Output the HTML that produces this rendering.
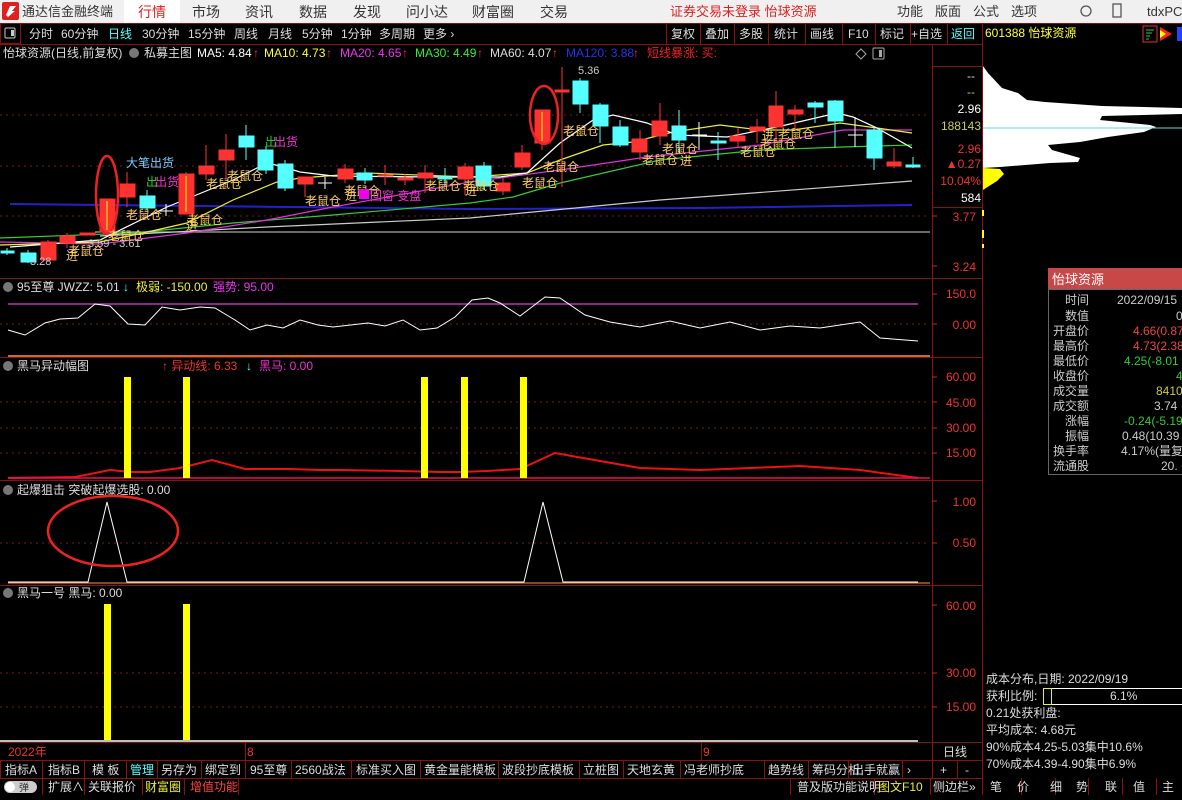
<!DOCTYPE html>
<html><head><meta charset="utf-8"><style>
*{margin:0;padding:0;box-sizing:border-box}
body{width:1182px;height:795px;overflow:hidden;background:#000;font-family:"Liberation Sans","Noto Sans CJK SC",sans-serif}
svg text{font-family:"Liberation Sans","Noto Sans CJK SC",sans-serif}
</style></head><body>
<svg width="1182" height="795" viewBox="0 0 1182 795" xmlns="http://www.w3.org/2000/svg">
<rect x="0" y="0" width="1182" height="23" fill="#f0f0f0"/>
<rect x="2" y="2" width="17" height="18" rx="2" fill="#e02020"/>
<path d="M6 15 L10 6 L16 6 L12 11 L15 11 L8 17 Z" fill="#fff"/>
<g font-size="13" fill="#333">
<text x="22" y="16">通达信金融终端</text>
<rect x="124" y="0" width="56" height="23" fill="#fff"/>
<text x="138" y="17" fill="#e02020" font-size="14">行情</text>
<text x="192" y="17" font-size="14">市场</text>
<text x="245" y="17" font-size="14">资讯</text>
<text x="299" y="17" font-size="14">数据</text>
<text x="353" y="17" font-size="14">发现</text>
<text x="406" y="17" font-size="14">问小达</text>
<text x="472" y="17" font-size="14">财富圈</text>
<text x="540" y="17" font-size="14">交易</text>
<text x="670" y="16" fill="#e02020">证券交易未登录  怡球资源</text>
<text x="897" y="16">功能</text><text x="935" y="16">版面</text><text x="973" y="16">公式</text><text x="1011" y="16">选项</text>
<text x="1147" y="16">tdxPC</text>
</g>
<circle cx="1086" cy="11" r="5" fill="none" stroke="#555" stroke-width="1.3"/>
<rect x="1113" y="4" width="8" height="13" fill="none" stroke="#555" stroke-width="1.3"/>
<rect x="0" y="23" width="1182" height="1" fill="#8a1010"/>
<g stroke="#8a1010" fill="none">
<rect x="0.5" y="23.5" width="20" height="20"/>
<line x1="0" y1="44.5" x2="982" y2="44.5"/>
<line x1="982.5" y1="23" x2="982.5" y2="795"/>
<line x1="666.5" y1="23" x2="666.5" y2="44"/><line x1="700.5" y1="23" x2="700.5" y2="44"/><line x1="734.5" y1="23" x2="734.5" y2="44"/><line x1="768.5" y1="23" x2="768.5" y2="44"/><line x1="805.5" y1="23" x2="805.5" y2="44"/><line x1="842.5" y1="23" x2="842.5" y2="44"/><line x1="875.5" y1="23" x2="875.5" y2="44"/><line x1="910.5" y1="23" x2="910.5" y2="44"/><line x1="947.5" y1="23" x2="947.5" y2="44"/>
</g>
<rect x="5" y="28" width="10" height="10" rx="1" fill="none" stroke="#ccc"/><rect x="11" y="30" width="3" height="6" fill="#ccc"/>
<g font-size="12" fill="#ddd">
<text x="29" y="38">分时</text><text x="61" y="38">60分钟</text><text x="108" y="38" fill="#5ff">日线</text><text x="142" y="38">30分钟</text><text x="188" y="38">15分钟</text><text x="234" y="38">周线</text><text x="268" y="38">月线</text><text x="302" y="38">5分钟</text><text x="341" y="38">1分钟</text><text x="379" y="38">多周期</text><text x="423" y="38">更多 ›</text>
<text x="671" y="38">复权</text><text x="705" y="38">叠加</text><text x="739" y="38">多股</text><text x="774" y="38">统计</text><text x="810" y="38">画线</text><text x="848" y="38">F10</text><text x="880" y="38">标记</text><text x="911" y="38">+自选</text><text x="951" y="38" fill="#5ff">返回</text>
<text x="985" y="37" fill="#ff3">601388 怡球资源</text>
</g>
<rect x="1143" y="26" width="14" height="16" fill="none" stroke="#d33"/>
<path d="M1146 30h8M1146 33h6M1146 36h4M1146 39h3" stroke="#3c3"/>
<path d="M1160 27 L1172 34 L1160 41Z" fill="#f22"/><path d="M1160 30 L1166 34 L1160 38Z" fill="#ff0"/>
<rect x="1177" y="27" width="5" height="14" fill="#24f"/>
<g font-size="12">
<text x="3" y="57" fill="#ddd">怡球资源(日线,前复权)</text>
<circle cx="134" cy="53" r="5" fill="#777"/>
<text x="144" y="57" fill="#ddd">私募主图</text>
<text x="197" y="57" fill="#fff">MA5: 4.84</text><text x="253" y="57" fill="#f33">↑</text>
<text x="264" y="57" fill="#ff3">MA10: 4.73</text><text x="326" y="57" fill="#f33">↑</text>
<text x="340" y="57" fill="#e3e">MA20: 4.65</text><text x="402" y="57" fill="#f33">↑</text>
<text x="415" y="57" fill="#3e3">MA30: 4.49</text><text x="477" y="57" fill="#f33">↑</text>
<text x="490" y="57" fill="#ddd">MA60: 4.07</text><text x="552" y="57" fill="#f33">↑</text>
<text x="566" y="57" fill="#23e">MA120: 3.88</text><text x="633" y="57" fill="#f33">↑</text>
<text x="647" y="57" fill="#e22">短线暴涨: 买:</text>
</g>
<path d="M861 49 L866 54 L861 59 L856 54Z" fill="none" stroke="#aaa"/>
<rect x="873" y="48" width="11" height="11" rx="1" fill="none" stroke="#aaa"/><rect x="879" y="50" width="3" height="7" fill="#aaa"/>
<g stroke="#8a1010" fill="none">
<line x1="932.5" y1="44" x2="932.5" y2="760"/>
<line x1="932" y1="66.5" x2="982" y2="66.5"/>
<line x1="932" y1="207.5" x2="982" y2="207.5"/>
<line x1="0" y1="278.5" x2="982" y2="278.5"/>
<line x1="0" y1="357.5" x2="982" y2="357.5"/>
<line x1="0" y1="480.5" x2="982" y2="480.5"/>
<line x1="0" y1="585.5" x2="982" y2="585.5"/>
<line x1="0" y1="742.5" x2="982" y2="742.5"/>
<line x1="0" y1="760.5" x2="982" y2="760.5"/>
<line x1="0" y1="778.5" x2="982" y2="778.5"/>
</g>
<g font-size="12" text-anchor="end">
<text x="975" y="80" fill="#ddd">--</text><text x="975" y="96" fill="#cc3">--</text>
<text x="981" y="113" fill="#fff">2.96</text><text x="981" y="130" fill="#cc6">188143</text>
<text x="981" y="153" fill="#e33">2.96</text><text x="981" y="168" fill="#e33">▲0.27</text>
<text x="981" y="185" fill="#e33">10.04%</text><text x="981" y="202" fill="#fff">584</text>
<text x="976" y="221" fill="#e33">3.77</text><text x="976" y="271" fill="#e33">3.24</text>
<text x="976" y="298" fill="#e33">150.0</text><text x="976" y="329" fill="#e33">0.00</text>
<text x="976" y="381" fill="#e33">60.00</text><text x="976" y="407" fill="#e33">45.00</text><text x="976" y="432" fill="#e33">30.00</text><text x="976" y="457" fill="#e33">15.00</text>
<text x="976" y="506" fill="#e33">1.00</text><text x="976" y="547" fill="#e33">0.50</text>
<text x="976" y="610" fill="#e33">60.00</text><text x="976" y="677" fill="#e33">30.00</text><text x="976" y="711" fill="#e33">15.00</text>
</g>
<g stroke="#c22">
<path d="M932 216h5M932 266h5M932 294h5M932 324h5M932 377h5M932 402h5M932 428h5M932 453h5M932 501h5M932 543h5M932 605h5M932 673h5M932 707h5"/>
</g>
<g stroke="#7a1a1a" stroke-dasharray="2 4">
<path d="M0 115H930M0 166H930M0 216H930M0 324H930M0 402H930M0 428H930M0 453H930M0 543H930M0 673H930M0 707H930"/>
</g>
<g fill="none" stroke-width="1.2">
<polyline stroke="#aaa" points="95,232 930,232"/>
<polyline stroke="#22c" stroke-width="2" points="10,204 470,209 700,208 912,205"/>
<polyline stroke="#ccc" points="100,236 267,227 470,218 660,200 912,181"/>
<polyline stroke="#3c3" points="0,238 133,233 233,223 333,215 470,203 513,197 560,183 660,160 760,150 843,147 912,145"/>
<polyline stroke="#d3d" points="0,242 100,244 187,233 267,220 333,207 470,182 560,170 647,157 760,145 843,130 912,130"/>
<polyline stroke="#ee3" points="0,245 100,242 143,233 187,223 233,200 277,182 300,178 367,173 470,177 527,173 560,160 603,145 633,142 673,132 720,125 760,130 793,130 840,123 877,128 912,133"/>
<polyline stroke="#fff" points="10,247 100,240 167,207 233,180 267,163 280,166 300,172 333,176 433,177 500,177 527,173 560,143 593,120 613,115 647,123 677,135 727,137 777,127 837,113 853,117 877,128 912,148"/>
</g>
<g stroke-width="1">
<g stroke="#5ff" fill="#5ff">
<line x1="7" y1="248" x2="7" y2="255"/><rect x="1" y="251" width="13" height="2"/>
<line x1="28" y1="250" x2="28" y2="263"/><rect x="21" y="253" width="15" height="9"/>
<line x1="147" y1="190" x2="147" y2="210"/><rect x="140" y="196" width="15" height="12"/>
<line x1="246" y1="125" x2="246" y2="160"/><rect x="239" y="136" width="15" height="11"/>
<line x1="266" y1="146" x2="266" y2="174"/><rect x="258" y="150" width="15" height="20"/>
<line x1="285" y1="160" x2="285" y2="191"/><rect x="278" y="164" width="15" height="24"/>
<line x1="365" y1="168" x2="365" y2="184"/><rect x="357" y="173" width="15" height="7"/>
<line x1="445" y1="168" x2="445" y2="186"/><rect x="438" y="177" width="14" height="2"/>
<line x1="484" y1="162" x2="484" y2="190"/><rect x="476" y="166" width="15" height="20"/>
<line x1="580" y1="78" x2="580" y2="113"/><rect x="573" y="81" width="15" height="23"/>
<line x1="600" y1="103" x2="600" y2="143"/><rect x="593" y="105" width="15" height="21"/>
<line x1="620" y1="120" x2="620" y2="147"/><rect x="613" y="127" width="15" height="18"/>
<line x1="679" y1="110" x2="679" y2="153"/><rect x="672" y="126" width="14" height="14"/>
<line x1="718" y1="132" x2="718" y2="160"/><rect x="711" y="141" width="15" height="2"/>
<line x1="815" y1="101" x2="815" y2="123"/><rect x="808" y="103" width="15" height="4"/>
<line x1="835" y1="100" x2="835" y2="148"/><rect x="828" y="101" width="15" height="20"/>
<line x1="874" y1="128" x2="874" y2="170"/><rect x="867" y="130" width="15" height="28"/>
<line x1="913" y1="157" x2="913" y2="168"/><rect x="906" y="165" width="14" height="2"/>
</g>
<g stroke="#ff3232" fill="#ff3232">
<line x1="48" y1="240" x2="48" y2="262"/><rect x="41" y="242" width="15" height="18"/>
<line x1="67" y1="233" x2="67" y2="248"/><rect x="60" y="236" width="15" height="7"/>
<rect x="80" y="233" width="15" height="2"/>
<line x1="107" y1="199" x2="107" y2="235"/><rect x="100" y="199" width="15" height="33"/>
<line x1="127" y1="172" x2="127" y2="207"/><rect x="120" y="184" width="15" height="13"/>
<line x1="186" y1="172" x2="186" y2="214"/><rect x="179" y="174" width="15" height="40"/>
<line x1="206" y1="145" x2="206" y2="180"/><rect x="199" y="166" width="15" height="8"/>
<line x1="226" y1="134" x2="226" y2="178"/><rect x="219" y="150" width="15" height="10"/>
<line x1="305" y1="177" x2="305" y2="197"/><rect x="298" y="177" width="15" height="7"/>
<line x1="345" y1="164" x2="345" y2="183"/><rect x="338" y="169" width="15" height="10"/>
<line x1="385" y1="165" x2="385" y2="185"/><rect x="378" y="175" width="15" height="1"/>
<line x1="405" y1="174" x2="405" y2="185"/><rect x="398" y="178" width="15" height="2"/>
<line x1="425" y1="165" x2="425" y2="193"/><rect x="418" y="173" width="15" height="5"/>
<line x1="465" y1="163" x2="465" y2="195"/><rect x="458" y="167" width="15" height="12"/>
<line x1="503" y1="178" x2="503" y2="195"/><rect x="496" y="183" width="14" height="8"/>
<line x1="522" y1="145" x2="522" y2="170"/><rect x="515" y="153" width="15" height="14"/>
<line x1="542" y1="110" x2="542" y2="150"/><rect x="535" y="110" width="15" height="33"/>
<line x1="562" y1="67" x2="562" y2="187"/><rect x="555" y="90" width="14" height="2"/>
<line x1="640" y1="130" x2="640" y2="160"/><rect x="632" y="139" width="15" height="13"/>
<line x1="660" y1="103" x2="660" y2="145"/><rect x="652" y="121" width="15" height="15"/>
<line x1="738" y1="128" x2="738" y2="148"/><rect x="730" y="136" width="15" height="5"/>
<line x1="757" y1="119" x2="757" y2="143"/><rect x="750" y="127" width="15" height="4"/>
<line x1="776" y1="91" x2="776" y2="143"/><rect x="769" y="106" width="14" height="21"/>
<line x1="795" y1="105" x2="795" y2="130"/><rect x="788" y="110" width="15" height="4"/>
<line x1="894" y1="148" x2="894" y2="168"/><rect x="887" y="162" width="14" height="4"/>
</g>
<g stroke="#fff">
<path d="M166 204v12M159 211h14M325 177v12M318 183h14M699 122v28M692 135h15M855 117v30M848 135h15"/>
</g>
<line x1="107" y1="201" x2="107" y2="230" stroke="#ff0"/>
<line x1="542" y1="112" x2="542" y2="141" stroke="#ff0"/>
<line x1="186" y1="176" x2="186" y2="212" stroke="#ff0"/>
</g>
<ellipse cx="107" cy="195" rx="11" ry="39" fill="none" stroke="#e22" stroke-width="2.5"/>
<ellipse cx="544" cy="115" rx="14" ry="29" fill="none" stroke="#e22" stroke-width="2.5"/>
<g font-size="12" fill="#ffd060">
<text x="126" y="219">老鼠仓</text><text x="68" y="255">老鼠仓</text><text x="108" y="240">老鼠仓</text>
<text x="187" y="224">老鼠仓</text><text x="206" y="188">老鼠仓</text><text x="227" y="180">老鼠仓</text>
<text x="305" y="205">老鼠仓</text><text x="344" y="195">老鼠仓</text><text x="425" y="190">老鼠仓</text><text x="463" y="190">老鼠仓</text>
<text x="522" y="187">老鼠仓</text><text x="543" y="171">老鼠仓</text><text x="563" y="135">老鼠仓</text>
<text x="642" y="164">老鼠仓</text><text x="662" y="153">老鼠仓</text><text x="740" y="156">老鼠仓</text>
<text x="760" y="148">老鼠仓</text><text x="778" y="138">老鼠仓</text>
<text x="186" y="230">进</text><text x="345" y="200">进</text><text x="465" y="195">进</text><text x="680" y="165">进</text><text x="762" y="140">进</text><text x="66" y="260">进</text>
</g>
<text x="126" y="167" font-size="12" fill="#7cf">大笔出货</text>
<text x="146" y="186" font-size="12" fill="#3c3">出</text><text x="155" y="186" font-size="12" fill="#e3c">出货</text>
<text x="265" y="146" font-size="12" fill="#3c3">出</text><text x="274" y="146" font-size="12" fill="#e3c">出货</text>
<rect x="359" y="189" width="10" height="10" fill="#e0e"/>
<text x="370" y="200" font-size="12" fill="#e3c">回窗 变盘</text>
<text x="578" y="74" font-size="11" fill="#ccc">5.36</text>
<text x="88" y="247" font-size="11" fill="#ccc">3.59 - 3.61</text>
<text x="30" y="265" font-size="11" fill="#ccc">3.28</text>
<g font-size="12">
<circle cx="8" cy="287" r="5" fill="#777"/>
<text x="17" y="291" fill="#ddd">95至尊  JWZZ: 5.01</text><text x="123" y="291" fill="#5ff">↓</text>
<text x="136" y="291" fill="#ee3">极弱: -150.00</text><text x="213" y="291" fill="#e3e">强势: 95.00</text>
</g>
<line x1="8" y1="304" x2="918" y2="304" stroke="#b3b" stroke-width="1.5"/>
<polyline fill="none" stroke="#fff" points="8,330 25,335 45,323 60,319 78,318 95,304 110,306 128,324 145,325 162,307 180,310 200,307 215,308 235,320 250,330 267,325 283,328 300,320 318,325 333,327 368,323 385,326 403,320 420,330 437,328 455,317 472,300 488,298 500,303 520,316 545,297 560,298 585,315 610,322 640,327 670,321 700,328 730,322 760,330 790,326 820,328 860,322 880,338 918,341"/>
<line x1="8" y1="356" x2="930" y2="356" stroke="#f93" stroke-width="1.5"/>
<g font-size="12">
<circle cx="8" cy="366" r="5" fill="#777"/>
<text x="17" y="370" fill="#ddd">黑马异动幅图</text>
<text x="162" y="370" fill="#e33">↑ 异动线: 6.33</text><text x="246" y="370" fill="#5ff">↓</text><text x="259" y="370" fill="#e3c">黑马: 0.00</text>
</g>
<polyline fill="none" stroke="#e11" stroke-width="2" points="8,478 75,477 110,470 130,472 150,472 180,468 212,460 245,469 290,469 320,470 340,470 400,471 440,472 460,472 487,471 520,469 555,453 600,461 640,468 700,470 800,466 860,470 918,478"/>
<line x1="8" y1="478" x2="930" y2="478" stroke="#e15" stroke-width="1.5"/>
<g fill="#ff0"><rect x="124" y="377" width="7" height="101"/><rect x="183" y="377" width="7" height="101"/><rect x="421" y="377" width="7" height="101"/><rect x="461" y="377" width="7" height="101"/><rect x="520" y="377" width="7" height="101"/></g>
<g font-size="12">
<circle cx="8" cy="490" r="5" fill="#777"/>
<text x="17" y="494" fill="#ddd">起爆狙击  突破起爆选股: 0.00</text>
</g>
<polyline fill="none" stroke="#fff" points="8,582 88,582 107,502 127,582 524,582 543,502 563,582 918,582"/>
<line x1="8" y1="583" x2="930" y2="583" stroke="#f93"/>
<ellipse cx="113" cy="531" rx="65" ry="35" fill="none" stroke="#e22" stroke-width="2.5"/>
<g font-size="12">
<circle cx="8" cy="593" r="5" fill="#777"/>
<text x="17" y="597" fill="#ddd">黑马一号  黑马: 0.00</text>
</g>
<g fill="#ff0"><rect x="104" y="604" width="7" height="136"/><rect x="183" y="604" width="7" height="136"/></g>
<line x1="0" y1="741" x2="918" y2="741" stroke="#fff" stroke-width="1.5"/>
<g font-size="12" fill="#e33"><text x="8" y="756">2022年</text><text x="247" y="756">8</text><text x="703" y="756">9</text></g>
<line x1="245.5" y1="742" x2="245.5" y2="760" stroke="#8a1010"/><line x1="701.5" y1="742" x2="701.5" y2="760" stroke="#8a1010"/>
<text x="943" y="756" font-size="12" fill="#ddd">日线</text>
<g stroke="#8a1010">
<path d="M0.5 760v18M42.5 760v18M84.5 760v18M126.5 760v18M157.5 760v18M201.5 760v18M245.5 760v18M291.5 760v18M351.5 760v18M420.5 760v18M498.5 760v18M579.5 760v18M623.5 760v18M680.5 760v18M764.5 760v18M808.5 760v18M848.5 760v18M902.5 760v18M932.5 760v18M957.5 760v18"/>
<path d="M42.5 778v17M84.5 778v17M142.5 778v17M184.5 778v17M238.5 778v17M790.5 778v17M874.5 778v17M930.5 778v17M1021.5 778v17M1055.5 778v17M1088.5 778v17M1122.5 778v17M1156.5 778v17"/>
</g>
<g font-size="12" fill="#ddd">
<text x="5" y="774">指标A</text><text x="48" y="774">指标B</text><text x="92" y="774">模 板</text><text x="130" y="774" fill="#5ff">管理</text><text x="161" y="774">另存为</text><text x="205" y="774">绑定到</text><text x="250" y="774">95至尊</text><text x="295" y="774">2560战法</text><text x="356" y="774">标准买入图</text><text x="424" y="774">黄金量能模板</text><text x="502" y="774">波段抄底模板</text><text x="583" y="774">立桩图</text><text x="627" y="774">天地玄黄</text><text x="684" y="774">冯老师抄底</text><text x="768" y="774">趋势线</text><text x="812" y="774">筹码分析</text><text x="852" y="774">出手就赢</text><text x="907" y="774">›</text>
<text x="940" y="774">+</text><text x="965" y="774">-</text>
<text x="48" y="791">扩展∧</text><text x="88" y="791">关联报价</text><text x="145" y="791" fill="#ee3">财富圈</text><text x="190" y="791" fill="#f44">增值功能</text>
<text x="797" y="791">普及版功能说明</text><text x="878" y="791" fill="#ee3">图文F10</text><text x="933" y="791">侧边栏»</text>
<text x="990" y="791">笔</text><text x="1017" y="791">价</text><text x="1050" y="791">细</text><text x="1076" y="791">势</text><text x="1105" y="791">联</text><text x="1133" y="791">值</text><text x="1162" y="791">主</text>
</g>
<rect x="4" y="781" width="33" height="12" rx="6" fill="#ccc"/><circle cx="10" cy="787" r="5" fill="#fff"/><text x="19" y="791" font-size="10" fill="#333">弹</text>
<polygon fill="#fff" points="983,66 988,73 1002,88 1018,93 1027,100 1045,102 1102,106 1182,108 1182,114 1102,116 1100,120 1150,125 1156,127 1144,132 1108,137 1080,142 1048,145 1052,150 1080,158 1078,162 1050,163 1000,167 983,168"/>
<polygon fill="#ff0" points="983,168 1000,169 1004,174 997,181 986,188 983,190"/>
<line x1="983" y1="128" x2="1182" y2="128" stroke="#5dd"/>
<path d="M983 210v6M983 230v8M983 244v4" stroke="#ff0" stroke-width="2"/>
<rect x="1048" y="268" width="134" height="21" fill="#c84848"/>
<text x="1052" y="284" font-size="13" fill="#fff">怡球资源</text>
<rect x="1048.5" y="289.5" width="134" height="185" fill="#000" stroke="#666"/>
<g font-size="12" text-anchor="end">
<g fill="#ccc"><text x="1089" y="304">时间</text><text x="1089" y="320">数值</text><text x="1089" y="335">开盘价</text><text x="1089" y="350">最高价</text><text x="1089" y="365">最低价</text><text x="1089" y="380">收盘价</text><text x="1089" y="395">成交量</text><text x="1089" y="410">成交额</text><text x="1089" y="425">涨幅</text><text x="1089" y="440">振幅</text><text x="1089" y="455">换手率</text><text x="1089" y="470">流通股</text></g>
</g>
<g font-size="12">
<text x="1117" y="304" fill="#ccc">2022/09/15</text><text x="1176" y="320" fill="#ccc">0</text>
<text x="1133" y="335" fill="#e44">4.66(0.87</text><text x="1133" y="350" fill="#e44">4.73(2.38</text>
<text x="1124" y="365" fill="#3c3">4.25(-8.01</text><text x="1176" y="380" fill="#3c3">4</text>
<text x="1156" y="395" fill="#cc3">8410</text><text x="1154" y="410" fill="#ccc">3.74</text>
<text x="1124" y="425" fill="#3c3">-0.24(-5.19</text><text x="1122" y="440" fill="#ccc">0.48(10.39</text>
<text x="1121" y="455" fill="#ccc">4.17%(量复</text><text x="1161" y="470" fill="#ccc">20.</text>
</g>
<g font-size="12" fill="#ddd">
<text x="986" y="683">成本分布,日期: 2022/09/19</text>
<text x="986" y="700">获利比例:</text>
<text x="986" y="717">0.21处获利盘:</text>
<text x="986" y="734">平均成本: 4.68元</text>
<text x="986" y="751">90%成本4.25-5.03集中10.6%</text>
<text x="986" y="768">70%成本4.39-4.90集中6.9%</text>
<text x="1110" y="700">6.1%</text>
</g>
<rect x="1043.5" y="688.5" width="140" height="16" fill="none" stroke="#fff"/>
<rect x="1043.5" y="688.5" width="8" height="16" fill="none" stroke="#ee3"/>
</svg>
</body></html>
